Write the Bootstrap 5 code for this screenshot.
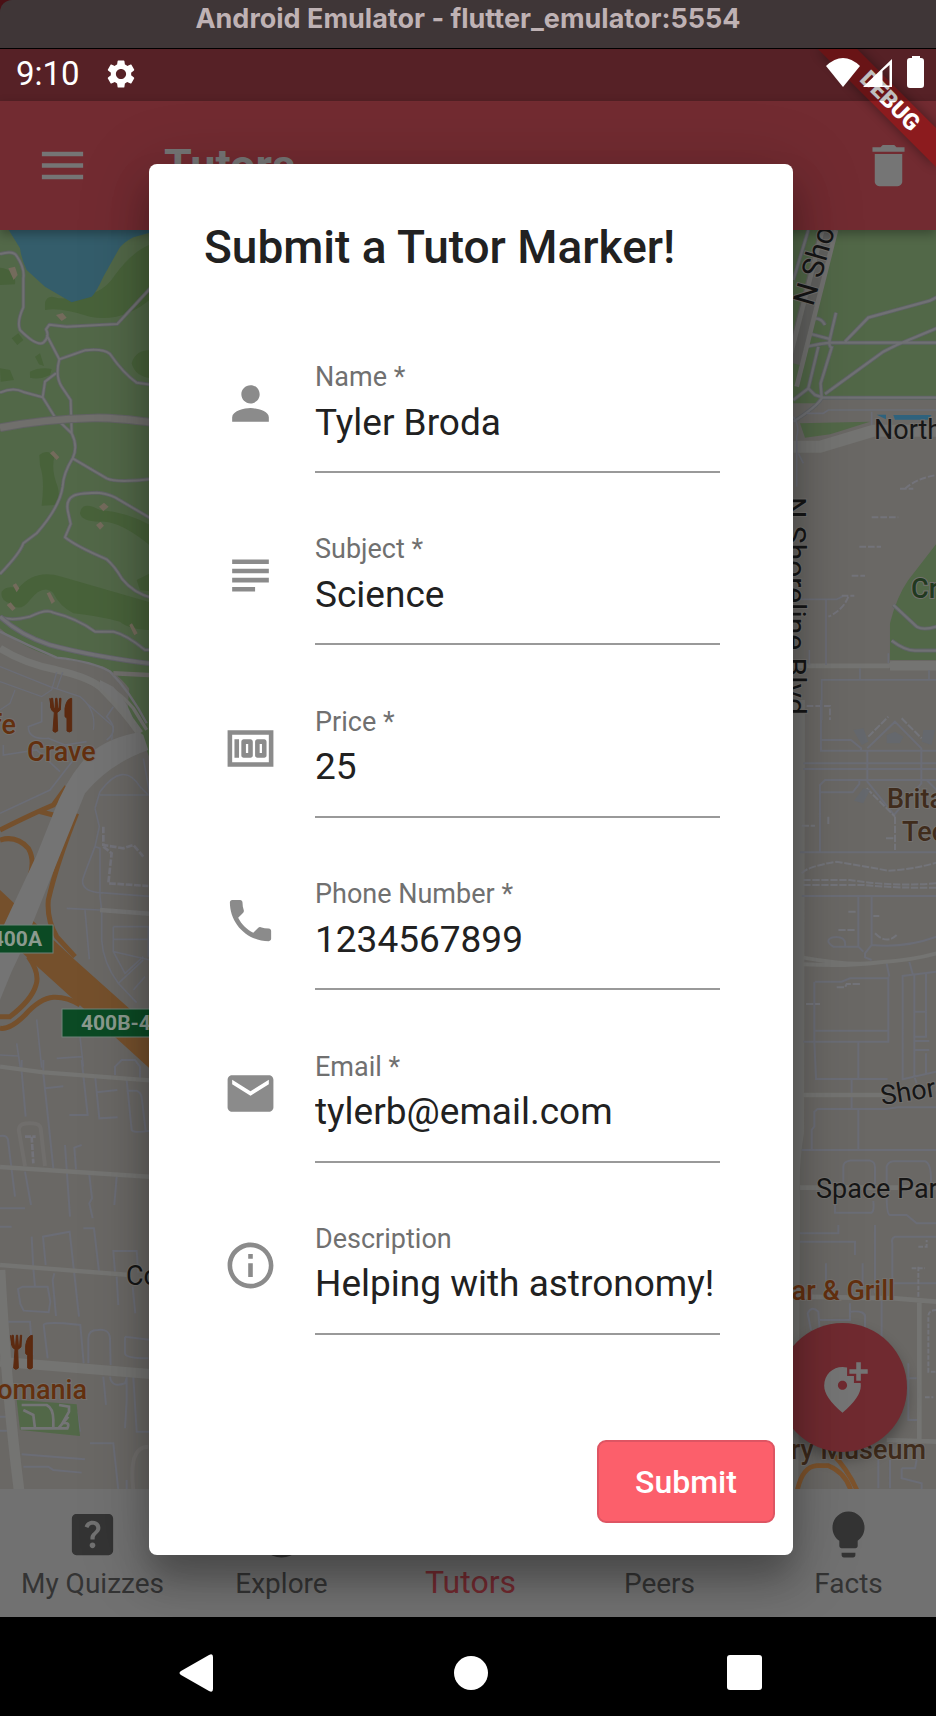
<!DOCTYPE html>
<html lang="en">
<head>
<meta charset="utf-8">
<meta name="viewport" content="width=device-width, initial-scale=1">
<title>Tutors</title>
<link rel="stylesheet" href="https://cdn.jsdelivr.net/npm/bootstrap@5.3.0/dist/css/bootstrap.min.css">
<style>
  body { font-family: Roboto, "Liberation Sans", sans-serif; background: #000; }
  .window-title { height: 49px; padding-bottom: 11px; background: #3f3637; color: #bfb2b4; border-bottom: 1px solid #000; border-top-left-radius: 12px; font: 700 27px/30px Inter, sans-serif; }
  .window-top { background: #4a1015; }
  .status-bar { height: 52px; padding: 0 10px 0 16px; background: #562126; color: #fff; font-size: 33px; line-height: 50px; }
  .app-bar { height: 129px; padding: 0 20px 0 35px; background: #722b31; color: #757575; box-shadow: 0 4px 10px rgba(0,0,0,.3); z-index: 1; }
  .app-bar h1 { font-size: 45px; line-height: 54px; font-weight: 700; margin: 0 0 0 74px; }
  .icon-btn { border: 0; padding: 0; background: none; color: inherit; line-height: 0; }
  .ico { width: 55px; height: 55px; fill: currentColor; flex: none; display: block; }
  .ribbon { top: 0; right: 0; width: 130px; height: 130px; z-index: 2; }
  .ribbon text { font: 900 23px Roboto, sans-serif; fill: #fff; }
  .status-icons { z-index: 3; }
  .map-art text { font-family: Roboto, sans-serif; font-size: 27px; paint-order: stroke; stroke: #73716e; stroke-width: 2px; }
  .map-art .avenue { font-size: 30px; }
  .map-art .food { fill: #63300f; font-weight: 500; }
  .map-art .sign text { font-size: 21px; font-weight: 700; fill: #8b9a8f; stroke: none; }
  .fab { right: 29px; bottom: 37px; width: 129px; height: 129px; background: #702a30; color: #757575; border: 0; box-shadow: 0 8px 14px rgba(0,0,0,.3); }
  .tab-bar { height: 128px; padding-top: 18px; margin: 0 -7px 0 -2px; background: #717171; font-size: 28px; line-height: 32px; }
  .tab-bar a { color: #343434; text-decoration: none; }
  .tab-bar a.active { color: #732a30; font-size: 32px; }
  .tab-bar span { margin-top: 6px; }
  .tab-bar .active span { margin-top: 4px; }
  .overlay { inset: 0; padding: 115px 143px 62px 149px; z-index: 4; }
  .dialog { background: #fff; color: #212121; border-radius: 8px; padding: 56px 18px 32px 55px; box-shadow: 0 24px 36px 0 rgba(0,0,0,.28), 0 10px 70px 8px rgba(0,0,0,.14); }
  .dialog h2 { font-size: 46px; line-height: 54px; font-weight: 500; margin: 0 0 88px; }
  .fields { padding: 0 55px 0 19px; margin-bottom: 105px; }
  .field { gap: 37px; }
  .field .ico { margin-top: 14px; color: #8b8b8b; }
  .field label { display: block; font-size: 27px; line-height: 30px; color: #707070; }
  .field input { display: block; width: 100%; border: 0; border-bottom: 2px solid #999; border-radius: 0; padding: 8px 0 27px; height: 81px; font-size: 37px; line-height: 44px; color: #212121; background: none; outline: 0; }
  .submit-btn { width: 178px; height: 83px; border-radius: 9px; border: 2px solid #de5563; background: #fc5f6b; color: #fff; font-size: 32px; font-weight: 500; padding: 0; }
  .system-nav { height: 99px; padding: 13px 54px 0 60px; }
  .system-nav svg { width: 38px; height: 38px; fill: #fff; display: block; }
</style>
</head>
<body class="d-flex flex-column min-vh-100">
<div class="window-top"><header class="window-title d-flex align-items-center justify-content-center">Android Emulator - flutter_emulator:5554</header></div>

<main class="position-relative flex-grow-1 d-flex flex-column overflow-hidden">
  <div class="status-bar d-flex justify-content-between">
    <div class="d-flex gap-4"><span>9:10</span>
      <svg width="34" height="34" viewBox="0 0 24 24" fill="#fff" class="mt-2"><path d="M19.14 12.94c.04-.3.06-.61.06-.94 0-.32-.02-.64-.07-.94l2.03-1.58c.18-.14.23-.41.12-.61l-1.92-3.32c-.12-.22-.37-.29-.59-.22l-2.39.96c-.5-.38-1.03-.7-1.62-.94l-.36-2.54c-.04-.24-.24-.41-.48-.41h-3.84c-.24 0-.43.17-.47.41l-.36 2.54c-.59.24-1.13.57-1.62.94l-2.39-.96c-.22-.08-.47 0-.59.22L2.74 8.87c-.12.21-.08.47.12.61l2.03 1.58c-.05.3-.09.63-.09.94s.02.64.07.94l-2.03 1.58c-.18.14-.23.41-.12.61l1.92 3.32c.12.22.37.29.59.22l2.39-.96c.5.38 1.03.7 1.62.94l.36 2.54c.05.24.24.41.48.41h3.84c.24 0 .44-.17.47-.41l.36-2.54c.59-.24 1.13-.56 1.62-.94l2.39.96c.22.08.47 0 .59-.22l1.92-3.32c.12-.22.07-.47-.12-.61l-2.01-1.58zM12 15.6c-1.98 0-3.6-1.62-3.6-3.6s1.62-3.6 3.6-3.6 3.6 1.62 3.6 3.6-1.62 3.6-3.6 3.6z"/></svg>
    </div>
    <svg class="status-icons position-relative" width="100" height="52" viewBox="0 0 100 52" fill="#fff"><path d="M0 17Q17 1 34 17L17 38z"/><path fill-rule="evenodd" d="M37 38L66 10v28zM56.500 22V36.500h7V16z"/><path d="M84 9h2v-2h8v2h1q3 0 3 3v24q0 3-3 3H84q-3 0-3-3V12q0-3 3-3z"/></svg>
  </div>
  <svg class="ribbon position-absolute" viewBox="0 0 130 130">
    <defs><filter id="soft" x="-20%" y="-20%" width="140%" height="140%"><feGaussianBlur stdDeviation="6"/></filter></defs>
    <path d="M12 0h39l79 79v39z" opacity=".4" filter="url(#soft)"/>
    <path d="M12 0h39l79 79v39z" fill="#8c1b1e"/>
    <text x="84" y="52" text-anchor="middle" dominant-baseline="central" transform="rotate(45 84 52)">DEBUG</text>
    <path d="M12 0h39l52 52H64z" opacity=".25"/>
  </svg>
  <div class="app-bar d-flex align-items-center position-relative">
    <button class="icon-btn" aria-label="Menu"><svg class="ico" viewBox="0 0 24 24"><path d="M3 18h18v-2H3v2zm0-5h18v-2H3v2zm0-7v2h18V6H3z"/></svg></button>
    <h1>Tutors</h1>
    <button class="icon-btn ms-auto" aria-label="Delete"><svg class="ico" viewBox="0 0 24 24"><path d="M6 19c0 1.100.9 2 2 2h8c1.100 0 2-.9 2-2V7H6v12zM19 4h-3.500l-1-1h-5l-1 1H5v2h14V4z"/></svg></button>
  </div>

  <section class="position-relative flex-grow-1 overflow-hidden" aria-label="Map">
    <svg class="map-art position-absolute top-0 start-0 w-100 h-100" viewBox="0 230 936 1259" preserveAspectRatio="xMidYMid slice">
      <path fill="#6a6865" d="M0 230h936v1259H0z"/>
      <!-- parks and lake, upper left -->
      <g transform="translate(0 220) scale(.3333)" fill="none">
        <path fill="#526848" d="M0 0h460v1440h-50Q370 1370 310 1340Q220 1320 170 1315Q60 1280 0 1225z"/>
        <path fill="#526848" d="M390 1375h70v270Q420 1530 382 1480z"/>
        <g fill="#48623a"><path d="M135 250Q140 220 175 235Q300 240 345 165Q400 90 460 70V230Q370 310 270 290Q180 260 135 270zM0 143q50 5 45 50l-45 2zM395 430q10-40 60-40v85q-50-5-60-45zM118 705q25-20 45 5q-10 40 10 90q10 40-10 55l-38 2q10-80-5-120zM240 880q5-40 60-10q80 5 160 50v65Q360 900 300 905q-55 0-60-25zM5 1115q15-20 50-10q50-60 130-35l275 80v80q-70 0-100-25q-80-20-140-25q-40-20-60-60q-30-30-70 20q-30 40-60 10q-30-10-25-35zM90 455q30-15 65-8l-5 18q-30 15-60 8zM105 410l15-10 12 38-15-5zM35 355l20-15 15 20-18 15zM0 445l30 5 12 30-40 5zM410 1080l50-25v60l-40-5z"/></g>
        <path fill="#345d6b" d="M20 20L60 85Q65 120 80 150L135 200L215 247L275 230Q290 215 310 170L355 90Q365 70 400 52L460 35V0z"/>
        <g fill="#746b5c"><path d="M25 145l20-5 8 25-12 15zM168 285l20-6 12 14-15 10zM150 700l10-8 18 20-8 8zM297 860l15-12 14 12-16 14zM288 915l14-10 10 12-12 12zM38 1095l10-5 10 15-8 12zM140 1120l10-4 15 28-10 8zM20 1155l12-8 15 18-10 8zM388 1215l8-5 17 30-10 6z"/></g>
        <g stroke-linejoin="round" stroke="#5f6364" stroke-width="11"><path id="tr" d="M0 102Q40 90 50 108Q75 145 70 175V262Q50 305 60 330Q110 380 130 368Q150 350 138 328L148 314L200 320L352 312L460 195M140 345L178 418L255 391Q310 385 330 402Q370 460 410 488L460 495M178 418Q165 470 185 500L212 540L215 640Q235 680 218 715Q190 760 188 800Q180 860 110 940L70 970Q60 1000 0 1062M0 518Q40 500 70 516L128 532L135 485L168 460M128 532L165 592L215 640M218 715L320 775Q350 790 460 776M460 900L345 832Q320 820 290 818Q230 820 220 828Q195 840 205 880L212 912L195 952Q230 980 320 1018Q345 1040 365 1075Q400 1120 460 1135M0 1190Q30 1205 90 1190Q140 1165 160 1178Q230 1195 285 1235H340Q380 1245 435 1290H460"/></g>
        <use href="#tr" stroke="#717173" stroke-width="6" stroke-linejoin="round"/>
        <path d="M0 623Q130 598 280 594Q340 592 460 608" stroke="#626264" stroke-width="26"/><path d="M0 623Q130 598 280 594Q340 592 460 608" stroke="#706f6c" stroke-width="20"/>
        <path d="M0 1190Q60 1245 150 1275Q280 1310 460 1332" stroke="#63636b" stroke-width="16"/><path d="M0 1190Q60 1245 150 1275Q280 1310 460 1332" stroke="#717174" stroke-width="10"/>
        <path d="M0 1235Q80 1275 170 1313Q280 1325 330 1355Q390 1415 440 1510" stroke="#717176" stroke-width="7"/>
        <path d="M0 1285Q70 1330 170 1350Q280 1375 310 1410Q370 1470 420 1540" stroke="#747472" stroke-width="22"/>
        <path d="M290 1390Q350 1405 400 1465L440 1530" stroke="#747472" stroke-width="10"/>
        <path d="M340 1360L460 1366" stroke="#72706e" stroke-width="14"/>
        <path d="M0 1340L150 1400L240 1430Q290 1470 280 1530M170 1357L155 1410L125 1430L0 1385M188 1357L170 1408M45 1410L30 1450L0 1470M260 1450L340 1520L335 1560" stroke="#6b6d76" stroke-width="4"/>
      </g>
      <!-- highway interchange -->
      <g transform="translate(0 680) scale(.3333)" fill="none">
        <g stroke="#6b6d76" stroke-width="5">
          <path d="M125 65v60l-40 15q0 40 60 35l50 20 65-10M10 195l0 30 100-15 70 65M0 400L150 330L220 240M340 80L320 110Q360 150 320 180M450 345L430 235M285 385L300 335Q370 240 420 320L445 345H300M285 385L298 440L285 500L300 505V650L305 690V780Q310 850 355 910L410 968M285 500Q250 590 248 600Q245 630 290 637L460 650M200 685L300 690M255 690L268 838M340 740h105v90M340 740v75l110 25M340 778h120M340 815l35 65L430 830M355 910L430 840M400 930l35-40M0 1125L55 1128M50 1090l12 80M110 1018l15 145M240 1070l10 90M170 1135l75-5"/>
          <path d="M310 440v55l60 10 30-10 30 35M310 500l25 20-10 90 120 8" stroke="#73737a" stroke-dasharray="20 5" stroke-width="8"/>
        </g>
        <g stroke="#75502c" stroke-width="15"><path d="M0 450Q100 400 160 375L200 320M120 395L160 405M0 480Q50 465 85 505Q105 540 90 590M230 400Q170 550 145 660Q140 720 170 770L225 830M85 830Q120 880 108 915Q95 960 30 1010H0M0 1045Q30 1050 75 1005Q120 955 160 952Q200 950 240 975"/></g>
        <path fill="#75502c" d="M0 630L225 840L460 1050V1175L90 840L0 755z"/>
        <path fill="#747474" d="M300 0L340 20Q390 70 410 150L430 165L445 210Q330 250 255 340Q190 500 70 800Q30 880 0 960V760L110 525L160 400Q200 290 270 220Q330 170 425 155Q380 90 300 25z"/>
        <path d="M300 690L460 702" stroke="#747474" stroke-width="14"/>
        <path id="fork" fill="#5c2a10" d="M150 55l5 35 8 8-4 55q6 8 14 0l-2-55 10-8 2-35-4 0-2 30-4 0-2-30-4 0-2 30-4 0-3-30-4 0-1 30-3-30zM215 55q-15 0-20 30v25l6 5v38q7 6 14 0z" stroke="#5c2a10" stroke-width="3"/>
      </g>
      <!-- streets, lower left -->
      <g transform="translate(0 1060) scale(.3333)" fill="none" stroke="#6b6d76" stroke-width="6">
        <path d="M65 0v35l12 135M130 0v40l30 285M135 85l55-6M245 0l18 165h-55M285 45l13 130 55-3M290 97l62-7M380 60l15 150q5 10 55 2M380 92h30q12 5 15 20l12 100M345 45V20l20-20h40l15 20v35M0 228q25-5 25 20l20 162M75 335l18 100M195 255l15 215M245 255l-22 8 5 65M268 345l8 70-8 15 10 45M350 350l-7 85M0 445h75M0 500h35M95 530l5 95 5 55M137 615l-8-85 80-15 28 255M250 505h32l15 130M345 635l-5-62h70l5 65M350 650l5 85M398 680l8 80M163 640l-5 20 10 108M68 680h75l8 45-5 32-75-5-10-20-7-45zM0 785l90 0 8 100M143 895l-12-100q0-8 60-5l50 5 10 115M265 910v-75q0-25 28-25 35-5 37 25l2 80M375 830l80 10M375 830v50q0 15 70 15M330 950q5 35 45 20l5-15M380 950v75l-5 80M400 950l10 165h50M310 950l8 85M240 1115l-10-60M65 1183l190 15M70 1220h75l15 10 85 8M270 1150h70l15 140M0 1070h30M0 1112h30M380 1260v30"/>
        <path d="M75 318L57 215Q52 190 85 190Q120 188 122 205L135 318M400 1290q-15-130 45-130" stroke="#706e6c" stroke-width="12"/>
        <g stroke="#747472" stroke-width="13"><path d="M0 20L130 37L460 62M0 321L460 351M0 615L390 645"/><path d="M0 905L460 943" stroke-width="30"/><path d="M0 630Q20 1000 57 1290" stroke-width="32"/></g>
        <path d="M75 230h32M95 230l5 80" stroke="#73737a" stroke-width="8" stroke-dasharray="18 4"/>
        <path fill="#526848" stroke="none" d="M50 1020L230 1033L240 1128L60 1110z"/>
        <path d="M65 1035h75q20 10 20 45v25M70 1050l30 15 5 40M62 1105h140q10-20-15-15l20-35 0-15-30-5M175 1105l30-35" stroke="#747476" stroke-width="8"/>
        <use href="#fork" x="-118" y="771"/>
      </g>
      <!-- upper right -->
      <g transform="translate(780 220) scale(.3333)" fill="none">
        <path fill="#526848" d="M0 0h470v540L130 535l-20 15H0zM60 610l210-5q-80 25-120 38l-75 10zM470 970v350H330V1210Q350 1130 385 1080Q420 1035 470 970z"/>
        <g stroke="#5f6366" stroke-width="12"><path id="tr2" d="M85 30L40 180M168 278L150 355Q145 380 155 383L122 490L125 535Q110 560 40 605M55 332L148 357M80 380L120 372L150 368L205 368H470M195 365L265 293L450 242L470 232M135 522L310 395L350 375L470 325M115 380L85 505L105 525L130 533H470M85 505L40 540M105 295q20 0 30 20M340 1155l70 65q20 12 60 0M335 1262q40 30 70 30h65"/></g>
        <use href="#tr2" stroke="#707174" stroke-width="7"/>
        <path d="M150 0L40 430" stroke="#61615f" stroke-width="50"/><path d="M135 0L25 430M168 30L50 500" stroke="#727270" stroke-width="14"/>
        <path d="M40 680H120L280 632H470" stroke="#747472" stroke-width="36"/>
        <path d="M0 1338H325L340 1330H470" stroke="#747472" stroke-width="14"/><path d="M330 1338H470" stroke="#747472" stroke-width="28"/>
        <path fill="#2e627d" d="M290 584h28v14zM340 585h115l-12 14H345z"/>
        <path d="M80 580h50l15-10H470M275 575v40M40 590Q60 620 50 650L50 800M55 700l15 30M60 1138h110l20-10M138 1140v195M88 1290v45M240 1345v35M447 1350v30M125 1500V1380H470M325 1300v30" stroke="#6b6d76" stroke-width="5"/>
        <path d="M275 892h80M238 980h65M215 1067h40M360 806h40M375 806Q410 775 470 765M185 1127h38M205 1130Q190 1170 145 1190M80 1458h70v42" stroke="#73737a" stroke-width="6" stroke-dasharray="20 6"/>
      </g>
      <!-- right-hand streets -->
      <g transform="translate(780 700) scale(.3333)" fill="none" stroke="#6b6d76" stroke-width="6">
        <path fill="#727270" stroke="none" d="M0 0h75L72 1300Q55 1400 60 1500L55 2370H0z"/>
        <path d="M123 0v152H470M123 120h90l30 25v10M262 150v95l80 100 82-95V145L345 65L262 145M70 190h400M70 207h400M120 455V255l15-15H470M123 277h95l20-25v-15M440 240l30 30M60 457h410M65 588h410M235 590v150l15 15M275 590v145l-20 25v12l20 8M235 740h-75q-30-20 0-28 40-5 35 28M275 735q100 10 195-25M103 845v180M70 1025H325V830M105 845h80l25-10h115M103 992h222M103 1025l5 112h215M235 1027v110M215 1137v90M65 1350h405M95 1350v-60l8-10v-45l10-8h205l35-5h120M235 1230v122M320 790l8 40M388 785l10 37M470 815L368 828V1138L470 1115M403 825V1130L410 1150M438 820V1010H400M403 935h35M403 1023h45M403 1050h45M438 1060v60M190 1450v-50q0-15 20-18h60q15 3 15 20v50M320 1450v-50q5-15 20-16h95q20 5 18 70"/>
        <path d="M65 520Q80 500 170 485L325 512Q390 510 470 488M70 540h140q120 20 260 10M70 555h180q100 10 220 8M65 377h40M145 350v25M345 350v100M318 415h30M260 265l85 85M265 110l60-60M365 55l60 60M205 635h25M280 648h18M175 690h50M285 700q35 35 65 5M170 862h25l5-10h40M78 912h42" stroke="#73747a" stroke-dasharray="22 5"/>
        <path fill="#65686d" stroke="none" d="M320 105l25-10 25 15-10 20h-40zM220 90l30-5 15 40-20 10zM430 90h35l-10 45-30-10zM250 265l20 5-20 40-28-8z"/>
        <path d="M70 773Q220 800 300 787Q400 780 470 760M70 793Q200 800 300 787" stroke="#747472" stroke-width="12"/><path d="M70 1185h250M60 1463h410" stroke="#747472" stroke-width="14"/>
      </g>
      <g transform="translate(780 1180) scale(.3333)" fill="none" stroke="#6b6d76" stroke-width="6">
        <path d="M60 160h115v-25M60 185h165v40M165 60v38l110 0q8-5 5-35M320 45q0 60 10 60h50l30 25h60M285 135v205M138 250v80M248 250v60l-8 30M470 170H345q-12 5-8 20v145M120 465l-5-70q-20-20-32 5l10 50M120 420h90v-50M210 395q50-5 45 20v40M305 360v110M340 310h130M385 550v170h30M380 595h30M295 840v85M330 840v85M365 865h40l5-25M365 865v30l60 15v20"/>
        <path d="M60 350L345 355L470 365M418 365V780M320 780L470 785" stroke="#747472" stroke-width="14"/><path d="M470 390q-25 0-25 20V575h25M435 652h25M415 200h25v-20M395 265h40M415 260v90" stroke="#73747a" stroke-dasharray="14 5"/>
        <path d="M50 940Q65 860 110 857H145Q200 880 215 940M160 825Q205 870 235 940" stroke="#7d532c" stroke-width="14"/>
      </g>
      <g class="sign"><rect x="-4" y="925" width="57" height="28" fill="#0b4a24" stroke="#70817a"/><text x="42" y="946" text-anchor="end">400A</text><rect x="62" y="1009" width="120" height="28" fill="#0b4a24" stroke="#70817a"/><text x="81" y="1030">400B-400C</text></g>
      <g fill="#161616">
        <text class="avenue" transform="translate(813 307) rotate(-74)">N Shoreline</text>
        <text x="874" y="439">North Rd</text>
        <text class="avenue" transform="translate(785 497) rotate(90)">N Shoreline Blvd</text>
        <text x="882" y="1105" transform="rotate(-9 882 1105)">Shoreline</text>
        <text x="816" y="1198">Space Park Way</text>
        <text x="126" y="1285">Coast</text>
      </g>
      <text x="911" y="598" fill="#21391f" font-weight="500">Crittenden</text>
      <g fill="#402c1c" font-weight="500"><text x="887" y="808">Britannia</text><text x="902" y="841">Tech</text><text x="926" y="1459" text-anchor="end">History Museum</text></g>
      <g class="food"><text x="27" y="761">Crave</text><text x="16" y="734" text-anchor="end">Cafe</text><text x="87" y="1399" text-anchor="end">Romania</text><text x="895" y="1300" text-anchor="end">Bar &amp; Grill</text></g>
    </svg>
    <button class="fab rounded-circle position-absolute d-flex align-items-center justify-content-center p-0" aria-label="Add marker"><svg class="ico" viewBox="0 0 24 24"><path fill-rule="evenodd" d="M20 1v3h3v2h-3v3h-2V6h-3V4h3V1zM12 13c1.100 0 2-.9 2-2s-.9-2-2-2-2 .9-2 2 .9 2 2 2zM14 3.250V7h3v3h2.920c.05.390.08.790.08 1.200 0 3.320-2.670 7.250-8 11.800-5.330-4.550-8-8.480-8-11.800C4 6.220 7.800 3 12 3c.680 0 1.350.080 2 .250z"/></svg></button>
  </section>

  <nav class="tab-bar d-flex text-center">
    <a href="#" class="col d-flex flex-column align-items-center"><svg class="ico" viewBox="0 0 24 24"><path d="M19 3H5c-1.100 0-2 .9-2 2v14c0 1.100.9 2 2 2h14c1.100 0 2-.9 2-2V5c0-1.100-.9-2-2-2zm-6.990 15c-.7 0-1.260-.56-1.260-1.260 0-.71.56-1.250 1.260-1.250.71 0 1.250.54 1.250 1.250-.01.69-.54 1.260-1.250 1.260zm3.010-7.400c-.76 1.110-1.480 1.460-1.870 2.170-.16.29-.22.48-.22 1.410h-1.820c0-.49-.08-1.290.31-1.980.49-.87 1.420-1.390 1.960-2.160.57-.81.25-2.330-1.370-2.330-1.060 0-1.580.8-1.800 1.480l-1.650-.7C9.010 7.150 10.220 6 11.990 6c1.480 0 2.490.67 3.010 1.520.44.72.7 2.070.02 3.080z"/></svg><span>My Quizzes</span></a>
    <a href="#" class="col d-flex flex-column align-items-center"><svg class="ico" viewBox="0 0 24 24"><circle cx="12" cy="12" r="10"/></svg><span>Explore</span></a>
    <a href="#" class="col d-flex flex-column align-items-center active"><svg class="ico" viewBox="0 0 24 24"><path d="M12 2C8.130 2 5 5.130 5 9c0 5.250 7 12 7 12s7-6.750 7-12c0-3.870-3.130-7-7-7z"/></svg><span>Tutors</span></a>
    <a href="#" class="col d-flex flex-column align-items-center"><svg class="ico" viewBox="0 0 24 24"><path d="M16 11a3 3 0 1 0 0-6 3 3 0 0 0 0 6zm-8 0a3 3 0 1 0 0-6 3 3 0 0 0 0 6zm0 2c-3 0-7 1-7 4v2h22v-2c0-3-5-4-7-4z"/></svg><span>Peers</span></a>
    <a href="#" class="col d-flex flex-column align-items-center"><svg class="ico" viewBox="0 0 24 24"><path d="M9 21c0 .5.4 1 1 1h4c.6 0 1-.5 1-1v-1H9v1zm3-19C8.100 2 5 5.100 5 9c0 2.400 1.200 4.500 3 5.700V17c0 .5.4 1 1 1h6c.6 0 1-.5 1-1v-2.300c1.800-1.300 3-3.400 3-5.700 0-3.900-3.100-7-7-7z"/></svg><span>Facts</span></a>
  </nav>

  <div class="overlay position-absolute d-flex">
    <form class="dialog flex-grow-1 d-flex flex-column" role="dialog" aria-labelledby="dialog-title">
      <h2 id="dialog-title">Submit a Tutor Marker!</h2>
      <div class="fields flex-grow-1 d-flex flex-column justify-content-between">
        <div class="field d-flex"><svg class="ico" viewBox="0 0 24 24"><path d="M12 12c2.210 0 4-1.790 4-4s-1.790-4-4-4-4 1.790-4 4 1.790 4 4 4zm0 2c-2.670 0-8 1.340-8 4v2h16v-2c0-2.660-5.330-4-8-4z"/></svg><div class="flex-grow-1"><label for="name">Name *</label><input id="name" type="text" value="Tyler Broda"></div></div>
        <div class="field d-flex"><svg class="ico" viewBox="0 0 24 24"><path d="M14 17H4v2h10v-2zm6-8H4v2h16V9zM4 15h16v-2H4v2zM4 5v2h16V5H4z"/></svg><div class="flex-grow-1"><label for="subject">Subject *</label><input id="subject" type="text" value="Science"></div></div>
        <div class="field d-flex"><svg class="ico" viewBox="0 0 24 24"><path d="M5 8h2v8H5zm7 0H9c-.55 0-1 .45-1 1v6c0 .55.45 1 1 1h3c.55 0 1-.45 1-1V9c0-.55-.45-1-1-1zm-1 6h-1v-4h1v4zm7-6h-3c-.55 0-1 .45-1 1v6c0 .55.45 1 1 1h3c.55 0 1-.45 1-1V9c0-.55-.45-1-1-1zm-1 6h-1v-4h1v4zM2 4v16h20V4H2zm2 14V6h16v12H4z"/></svg><div class="flex-grow-1"><label for="price">Price *</label><input id="price" type="text" value="25"></div></div>
        <div class="field d-flex"><svg class="ico" viewBox="0 0 24 24"><path d="M6.620 10.790c1.440 2.830 3.760 5.140 6.590 6.590l2.200-2.200c.27-.27.67-.36 1.020-.24 1.120.37 2.330.57 3.570.57.55 0 1 .45 1 1V20c0 .55-.45 1-1 1-9.390 0-17-7.610-17-17 0-.55.45-1 1-1h3.500c.55 0 1 .45 1 1 0 1.250.2 2.450.57 3.570.11.35.03.74-.25 1.020l-2.200 2.200z"/></svg><div class="flex-grow-1"><label for="phone">Phone Number *</label><input id="phone" type="tel" value="1234567899"></div></div>
        <div class="field d-flex"><svg class="ico" viewBox="0 0 24 24"><path d="M20 4H4c-1.100 0-1.990.9-1.990 2L2 18c0 1.100.9 2 2 2h16c1.100 0 2-.9 2-2V6c0-1.100-.9-2-2-2zm0 4l-8 5-8-5V6l8 5 8-5v2z"/></svg><div class="flex-grow-1"><label for="email">Email *</label><input id="email" type="email" value="tylerb@email.com"></div></div>
        <div class="field d-flex"><svg class="ico" viewBox="0 0 24 24"><path d="M11 7h2v2h-2zm0 4h2v6h-2zm1-9C6.480 2 2 6.480 2 12s4.480 10 10 10 10-4.480 10-10S17.520 2 12 2zm0 18c-4.410 0-8-3.590-8-8s3.590-8 8-8 8 3.590 8 8-3.590 8-8 8z"/></svg><div class="flex-grow-1"><label for="description">Description</label><input id="description" type="text" value="Helping with astronomy!"></div></div>
      </div>
      <button type="button" class="submit-btn align-self-end">Submit</button>
    </form>
  </div>
</main>

<footer class="system-nav d-flex align-items-center">
  <div class="d-flex w-100 justify-content-around">
    <svg viewBox="0 0 38 38"><path d="M3 17L31 1q4-2 4 2v32q0 4-4 2L3 21q-3-2 0-4z"/></svg>
    <svg viewBox="0 0 38 38"><circle cx="19" cy="19" r="17"/></svg>
    <svg viewBox="0 0 38 38"><rect x="1" y="1" width="35" height="35" rx="3"/></svg>
  </div>
</footer>
<script src="https://cdn.jsdelivr.net/npm/bootstrap@5.3.0/dist/js/bootstrap.bundle.min.js"></script>
</body>
</html>
